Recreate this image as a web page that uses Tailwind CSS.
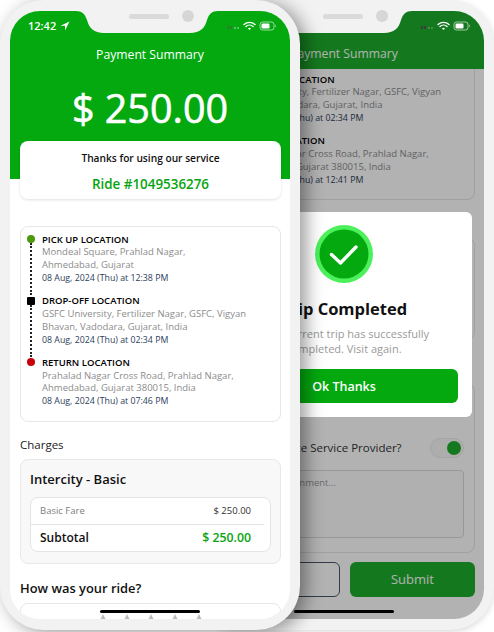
<!DOCTYPE html>
<html lang="en">
<head>
  <meta charset="UTF-8" />
  <meta name="viewport" content="width=device-width, initial-scale=1.0" />
  <title>Payment Summary</title>
  <script src="https://cdn.jsdelivr.net/npm/@tailwindcss/browser@4"></script>
</head>
<body class="bg-white font-['Open_Sans',sans-serif]">
<div class="relative w-[494px] h-[632px] overflow-hidden bg-white">

  <!-- Back phone -->
  <div class="absolute left-[194px] top-0 w-[300px] h-[630px] rounded-[44px] bg-[#f2f2f2] shadow-[0_2px_6px_rgba(0,0,0,0.15)]">
    <div class="absolute left-[10px] top-[11px] w-[280px] h-[608px] rounded-[30px] overflow-hidden bg-white flex flex-col">
      <div class="h-[58px] shrink-0 bg-[#1dae2b] flex items-end justify-center pb-[6px] text-white text-[12.2px] leading-[18px]">Payment Summary</div>

      <div class="pl-[10px] pr-[9px] flex flex-col">
        <div class="h-[131px] rounded-b-lg border border-t-0 border-[#e6e6e6] pl-[22px] pt-[4.5px] text-[9.5px] leading-[12.8px]">
          <div class="pb-[10.5px]">
            <p class="font-semibold text-[9.5px] text-black">DROP-OFF LOCATION</p>
            <p class="text-[#8c8c8c]">GSFC University, Fertilizer Nagar, GSFC, Vigyan</p>
            <p class="text-[#8c8c8c]">Bhavan, Vadodara, Gujarat, India</p>
            <p class="text-[8.8px] text-[#2c3e5a]">08 Aug, 2024 (Thu) at 02:34 PM</p>
          </div>
          <div>
            <p class="font-semibold text-[9.5px] text-black">RETURN LOCATION</p>
            <p class="text-[#8c8c8c]">Prahalad Nagar Cross Road, Prahlad Nagar,</p>
            <p class="text-[#8c8c8c]">Ahmedabad, Gujarat 380015, India</p>
            <p class="text-[8.8px] text-[#2c3e5a]">08 Aug, 2024 (Thu) at 12:41 PM</p>
          </div>
        </div>
        <div class="mt-[37px] h-[103px] rounded-lg border border-[#e6e6e6]"></div>
        <div class="mt-[43px] h-[170px] rounded-lg border border-[#e6e6e6] pl-[49px] pr-[10px] pt-[53px]">
          <div class="flex items-center justify-between h-[21px]">
            <span class="text-[11.5px] text-[#333333]">Favorite Service Provider?</span>
            <span class="w-[34px] h-[20px] rounded-full border border-[#ececec] bg-[#f8f8f8] flex items-center justify-end pr-[2px]"><span class="w-[14px] h-[14px] rounded-full bg-[#1dae2b]"></span></span>
          </div>
          <div class="mt-[12px] -ml-[39px] h-[68px] rounded border border-[#dadada] bg-[#fcfcfc] pl-[40px] pr-[10px] py-[5px] text-[9.5px] text-[#9a9a9a]">Add comment...</div>
        </div>
        <div class="mt-[9px] flex gap-[10px]">
          <div class="w-[126px] h-[35px] rounded-md border border-[#4a5568] bg-white flex items-center justify-center text-[13px] text-[#4a5568]">Cancel</div>
          <div class="w-[125px] h-[35px] rounded-md bg-[#1dae2b] flex items-center justify-center text-[13px] text-white">Submit</div>
        </div>
      </div>

      <div class="absolute inset-0 bg-black/30"></div>

      <!-- status icons -->
      <svg class="absolute left-[217px] top-[10px]" width="50" height="10" viewBox="0 0 50 10">
        <g fill="#3d3d3d"><rect x="0" y="5" width="2" height="3"/><rect x="3" y="5" width="2" height="3"/></g>
        <g fill="#5c8f5c"><circle cx="8" cy="7" r="1"/><circle cx="11" cy="7" r="1"/></g>
        <path d="M17 3.600a8 8 0 0 1 11 0M19 5.600a5 5 0 0 1 7 0" fill="none" stroke="#fff" stroke-width="1.400" stroke-linecap="round"/>
        <path d="M21 7.400a2.200 2.200 0 0 1 3 0L22.500 9z" fill="#fff"/>
        <rect x="33" y="1" width="14" height="8" rx="2.500" fill="none" stroke="#fff" stroke-opacity=".6"/>
        <rect x="34.500" y="2.500" width="8" height="5" rx="1.200" fill="#fff"/>
        <path d="M48 3.500c1 .5 1 2.500 0 3z" fill="#fff" fill-opacity=".6"/>
      </svg>

      <!-- Trip completed modal -->
      <div class="absolute left-[12px] top-[201px] w-[256px] h-[205px] rounded-md bg-white flex flex-col items-center pt-[13px]">
        <svg width="58" height="58" viewBox="0 0 58 58">
          <circle cx="29" cy="29" r="29" fill="#4cf05a"/>
          <circle cx="29" cy="29" r="24.500" fill="#03a90f"/>
          <path d="M16.500 29.500 25.500 38 41 22" fill="none" stroke="#fff" stroke-width="3.400" stroke-linecap="round" stroke-linejoin="round"/>
        </svg>
        <h2 class="mt-[14px] text-[16.5px] leading-[24px] font-bold text-[#111111]">Trip Completed</h2>
        <p class="mt-[5px] text-center text-[11px] leading-[15px] text-[#9a9a9a]">Your current trip has successfully<br>completed. Visit again.</p>
        <div class="mt-[13px] w-[228px] h-[34px] rounded-md bg-[#03a90f] flex items-center justify-center pt-[2px] text-[12.5px] font-semibold text-white">Ok Thanks</div>
      </div>

      <div class="absolute left-[90px] bottom-[6px] w-[100px] h-[3px] rounded-full bg-black"></div>
    </div>
    <!-- notch -->
    <svg class="absolute left-[76px] top-[11px]" width="142" height="23" viewBox="0 0 142 23">
      <path d="M0 0H142C136 0 133 3 131 9C129 17 124 22 114 22H28C18 22 13 17 11 9C9 3 6 0 0 0Z" fill="#f2f2f2"/>
    </svg>
    <div class="absolute left-[129px] top-[14px] w-[40px] h-[5px] rounded-full bg-[#dadada]"></div>
    <div class="absolute left-[182px] top-[10px] w-[12px] h-[12px] rounded-full bg-[#d6d6d6]"></div>
  </div>

  <!-- Front phone -->
  <div class="absolute left-0 top-0 w-[300px] h-[630px] rounded-[44px] bg-[#f2f2f2] shadow-[6px_3px_18px_rgba(0,0,0,0.4)]">
    <div class="absolute left-[10px] top-[11px] w-[280px] h-[608px] rounded-[30px] overflow-hidden bg-white">
      <div class="h-[168px] bg-[#03a90f] text-white text-center pt-[35px]">
        <p class="text-[12.2px] leading-[18px]">Payment Summary</p>
        <p class="mt-[19px] text-[39.5px] leading-[50px] [-webkit-text-stroke:0.6px_white]">$ 250.00</p>
      </div>
      <div class="pl-[10px] pr-[9px] -mt-[38px] flex flex-col">
        <div class="h-[58px] rounded-lg bg-white shadow-[0_1px_3px_rgba(0,0,0,0.12)] flex flex-col items-center pt-[10px]">
          <p class="text-[10.2px] leading-[15px] font-semibold text-[#111111]">Thanks for using our service</p>
          <p class="mt-[10px] text-[13.4px] leading-[17px] font-semibold text-[#06a50f]">Ride #1049536276</p>
        </div>

        <div class="mt-[27px] h-[196px] rounded-lg border border-[#e6e6e6] pl-[6px] pt-[6.500px] text-[9.5px] leading-[12.800px]">
          <div class="flex gap-[7px] h-[61.700px]">
            <div class="w-[8px] flex flex-col items-center pt-[1.500px]">
              <span class="w-[8px] h-[8px] shrink-0 rounded-full bg-[#4c9a0a]"></span>
              <span class="flex-1 border-l-2 border-dotted border-[#222222]"></span>
            </div>
            <div>
              <p class="font-semibold text-[9.5px] text-black">PICK UP LOCATION</p>
              <p class="text-[#8c8c8c]">Mondeal Square, Prahlad Nagar,</p>
              <p class="text-[#8c8c8c]">Ahmedabad, Gujarat</p>
              <p class="text-[8.8px] text-[#2c3e5a]">08 Aug, 2024 (Thu) at 12:38 PM</p>
            </div>
          </div>
          <div class="flex gap-[7px] h-[61.700px]">
            <div class="w-[8px] flex flex-col items-center pt-[1.500px]">
              <span class="w-[8px] h-[8px] shrink-0 rounded-[1px] bg-black"></span>
              <span class="flex-1 border-l-2 border-dotted border-[#222222]"></span>
            </div>
            <div>
              <p class="font-semibold text-[9.5px] text-black">DROP-OFF LOCATION</p>
              <p class="text-[#8c8c8c]">GSFC University, Fertilizer Nagar, GSFC, Vigyan</p>
              <p class="text-[#8c8c8c]">Bhavan, Vadodara, Gujarat, India</p>
              <p class="text-[8.8px] text-[#2c3e5a]">08 Aug, 2024 (Thu) at 02:34 PM</p>
            </div>
          </div>
          <div class="flex gap-[7px]">
            <div class="w-[8px] flex flex-col items-center pt-[1.500px]">
              <span class="w-[8px] h-[8px] shrink-0 rounded-full bg-[#c8000a]"></span>
            </div>
            <div>
              <p class="font-semibold text-[9.5px] text-black">RETURN LOCATION</p>
              <p class="text-[#8c8c8c]">Prahalad Nagar Cross Road, Prahlad Nagar,</p>
              <p class="text-[#8c8c8c]">Ahmedabad, Gujarat 380015, India</p>
              <p class="text-[8.8px] text-[#2c3e5a]">08 Aug, 2024 (Thu) at 07:46 PM</p>
            </div>
          </div>
        </div>

        <p class="mt-[14px] text-[11.5px] leading-[18px] text-[#222222]">Charges</p>
        <div class="mt-[5px] h-[105px] rounded-lg border border-[#e8e8e8] bg-[#f8f8f8] px-[9px] pt-[9px]">
          <p class="text-[13px] leading-[20px] font-semibold text-[#111111]">Intercity - Basic</p>
          <div class="mt-[8px] h-[55px] rounded-lg border border-[#e4e4e4] bg-white flex flex-col">
            <div class="h-[27px] mr-[6px] flex items-center justify-between pl-[9px] pr-[13px] border-b border-[#e4e4e4]">
              <span class="text-[9.500px] text-[#808080]">Basic Fare</span>
              <span class="text-[9.500px] text-[#333333]">$ 250.00</span>
            </div>
            <div class="flex-1 mr-[6px] flex items-center justify-between pl-[9px] pr-[13px]">
              <span class="text-[12px] font-semibold text-[#111111]">Subtotal</span>
              <span class="text-[12.3px] font-semibold text-[#06a50f]">$ 250.00</span>
            </div>
          </div>
        </div>
        <p class="mt-[14px] text-[12.9px] leading-[20px] font-semibold text-[#111111]">How was your ride?</p>
        <div class="mt-[5px] h-[40px] rounded-lg border border-[#e6e6e6] flex justify-center gap-[16px] pl-[1px] pt-[10px]">
          <svg width="8" height="8" viewBox="0 0 8 8"><path d="M4 0 6.500 5H1.500z" fill="#bdbdbd"/></svg>
          <svg width="8" height="8" viewBox="0 0 8 8"><path d="M4 0 6.500 5H1.500z" fill="#bdbdbd"/></svg>
          <svg width="8" height="8" viewBox="0 0 8 8"><path d="M4 0 6.500 5H1.500z" fill="#bdbdbd"/></svg>
          <svg width="8" height="8" viewBox="0 0 8 8"><path d="M4 0 6.500 5H1.500z" fill="#bdbdbd"/></svg>
          <svg width="8" height="8" viewBox="0 0 8 8"><path d="M4 0 6.500 5H1.500z" fill="#bdbdbd"/></svg>
        </div>
      </div>

      <!-- status bar -->
      <div class="absolute left-[18px] top-[8px] flex items-center gap-[4px] text-white text-[11px] leading-[14px] font-semibold">
        <span>12:42</span>
        <svg width="10" height="10" viewBox="0 0 10 10"><path d="M9.500.5 .5 4.700h4.500v4.800z" fill="#fff"/></svg>
      </div>
      <svg class="absolute left-[217px] top-[10px]" width="50" height="10" viewBox="0 0 50 10">
        <g fill="#2f7d2f"><rect x="0" y="5" width="2" height="3"/><rect x="3" y="5" width="2" height="3"/></g>
        <g fill="#6fd077"><circle cx="8" cy="7" r="1"/><circle cx="11" cy="7" r="1"/></g>
        <path d="M17 3.600a8 8 0 0 1 11 0M19 5.600a5 5 0 0 1 7 0" fill="none" stroke="#fff" stroke-width="1.400" stroke-linecap="round"/>
        <path d="M21 7.400a2.200 2.200 0 0 1 3 0L22.500 9z" fill="#fff"/>
        <rect x="33" y="1" width="14" height="8" rx="2.500" fill="none" stroke="#fff" stroke-opacity=".6"/>
        <rect x="34.500" y="2.500" width="8" height="5" rx="1.200" fill="#fff"/>
        <path d="M48 3.500c1 .5 1 2.500 0 3z" fill="#fff" fill-opacity=".6"/>
      </svg>
      <div class="absolute left-[90px] bottom-[6px] w-[100px] h-[3px] rounded-full bg-black"></div>
    </div>
    <svg class="absolute left-[76px] top-[11px]" width="142" height="23" viewBox="0 0 142 23">
      <path d="M0 0H142C136 0 133 3 131 9C129 17 124 22 114 22H28C18 22 13 17 11 9C9 3 6 0 0 0Z" fill="#f2f2f2"/>
    </svg>
    <div class="absolute left-[129px] top-[14px] w-[40px] h-[5px] rounded-full bg-[#dadada]"></div>
    <div class="absolute left-[182px] top-[10px] w-[12px] h-[12px] rounded-full bg-[#d6d6d6]"></div>
  </div>
</div>
</body>
</html>
